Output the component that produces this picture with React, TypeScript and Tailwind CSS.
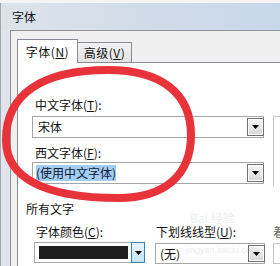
import React from "react";

const Tri = () => (
  <svg width="7" height="4" viewBox="0 0 7 4">
    <polygon points="0,0 7,0 3.5,4" fill="#000" />
  </svg>
);

const GrayBtn = () => (
  <div className="w-[17px] -mr-px my-[1px] border border-[#6f6f6f] bg-gradient-to-b from-[#f6f6f6] to-[#d6d6d6] flex items-center justify-center shadow-[inset_0_0_0_1px_#ffffff]">
    <Tri />
  </div>
);

export default function App() {
  return (
    <div className="w-[280px] h-[266px] overflow-hidden relative bg-[#f2f2f2] font-['Noto_Sans_CJK_SC',sans-serif] text-[12px] text-[#111]">
      <div className="h-[3px] bg-[#f4f4f4]" />
      <div className="flex h-[263px]">
        <div className="w-[5px] bg-[#d0d2d4] border-r border-[#a4a9ae]" />
        <div className="flex-1 flex flex-col">
          <div className="h-[27px] shrink-0 bg-gradient-to-r from-[#dde3ea] via-[#cfdbe9] to-[#c4d6eb] flex items-center pl-[11px] leading-none">
            字体
          </div>
          <div className="flex flex-1">
            <div className="w-[9px] bg-[#e0e5eb]" />
            <div className="flex-1 flex flex-col border-l border-t border-[#8d949c] bg-[#f0f0f0] pl-[6px] pt-[8px]">
              {/* tabs */}
              <div className="flex items-end h-[24px] -mb-px relative z-10">
                <div className="w-[61px] h-[24px] bg-white border border-b-0 border-[#898c95] flex items-center justify-center leading-none tracking-[0.5px]">
                  字体(<span className="underline underline-offset-[1px]">N</span>)
                </div>
                <div className="w-[54px] h-[21px] border border-l-0 border-[#898c95] bg-gradient-to-b from-[#f2f2f2] to-[#e3e3e3] flex items-center justify-center leading-none tracking-[0.5px]">
                  高级(<span className="underline underline-offset-[1px]">V</span>)
                </div>
              </div>
              {/* panel */}
              <div className="flex-1 bg-white border-l border-t border-[#898c95] flex flex-col pl-[14px] pt-[34px]">
                <div className="flex">
                  <div className="w-[232px] flex flex-col">
                    <div className="h-[16px] leading-[16px] pl-[3px]">
                      中文字体(<span className="underline">T</span>):
                    </div>
                    <div className="mt-[3px] h-[22px] border border-[#a6a6a6] flex">
                      <div className="flex-1 flex items-center pl-[5px] leading-none">宋体</div>
                      <GrayBtn />
                    </div>
                    <div className="mt-[7px] h-[16px] leading-[16px] pl-[3px]">
                      西文字体(<span className="underline">F</span>):
                    </div>
                    <div className="mt-[1px] h-[22px] border border-[#a6a6a6] flex">
                      <div className="flex-1 flex items-center pl-[3px]">
                        <span className="bg-[#a4cdf3] h-[16px] leading-[16px] text-[#0c1a33]">(使用中文字体)</span>
                      </div>
                      <GrayBtn />
                    </div>
                  </div>
                  <div className="ml-[9px] flex-1 flex flex-col">
                    <div className="h-[19px]" />
                    <div className="h-[70px] border-l border-t border-[#c4c4c4]" />
                  </div>
                </div>
                <div className="mt-[15px] -ml-[6px] h-[16px] leading-[16px]">所有文字</div>
                <div className="mt-[7px] ml-[2px] flex">
                  <div className="w-[111px] flex flex-col">
                    <div className="h-[16px] leading-[16px] pl-[2px]">
                      字体颜色(<span className="underline">C</span>):
                    </div>
                    <div className="mt-[2px] h-[21px] border border-[#a6a6a6] flex">
                      <div className="flex-1 flex items-center pl-[4px] pr-[3px]">
                        <div className="h-[13px] flex-1 bg-[#1e1e1e]" />
                      </div>
                      <div className="w-[14px] -my-px -mr-px border border-[#3c7fb1] bg-gradient-to-b from-[#e8f4fd] to-[#c4e3f8] flex items-center justify-center">
                        <Tri />
                      </div>
                    </div>
                  </div>
                  <div className="ml-[10px] w-[110px] flex flex-col">
                    <div className="h-[16px] leading-[16px] pl-[1px] whitespace-nowrap">
                      下划线线型(<span className="underline">U</span>):
                    </div>
                    <div className="mt-[3px] h-[21px] border border-[#a6a6a6] flex">
                      <div className="flex-1 flex items-center pl-[4px] leading-none">(无)</div>
                      <GrayBtn />
                    </div>
                  </div>
                  <div className="ml-[8px] flex flex-col whitespace-nowrap">
                    <div className="h-[16px] leading-[16px] text-[#666]">着重号(·):</div>
                    <div className="mt-[3px] h-[21px] w-[60px] border border-[#c4c4c4]" />
                  </div>
                </div>
              </div>
            </div>
          </div>
        </div>
      </div>

      {/* watermark */}
      <div className="absolute left-[190px] top-[212px] text-[12px] text-[#8a939d] opacity-15 leading-none pointer-events-none">
        Bai 经验
      </div>
      <div className="absolute left-[186px] top-[246px] text-[9px] text-[#8a939d] opacity-15 leading-none font-['Liberation_Sans',sans-serif] pointer-events-none">
        jingyan.baidu.com
      </div>

      {/* red annotation circle */}
      <svg className="absolute left-0 top-0 pointer-events-none" width="280" height="266" viewBox="0 0 280 266">
        <path
          d="M6,140 C6,94 42,70 108,70 C161,70 191,93 191,135 C191,175 165,198 118,198 C45,198 6,178 6,140 Z"
          fill="none"
          stroke="#e8333a"
          strokeWidth="8"
        />
      </svg>
    </div>
  );
}
